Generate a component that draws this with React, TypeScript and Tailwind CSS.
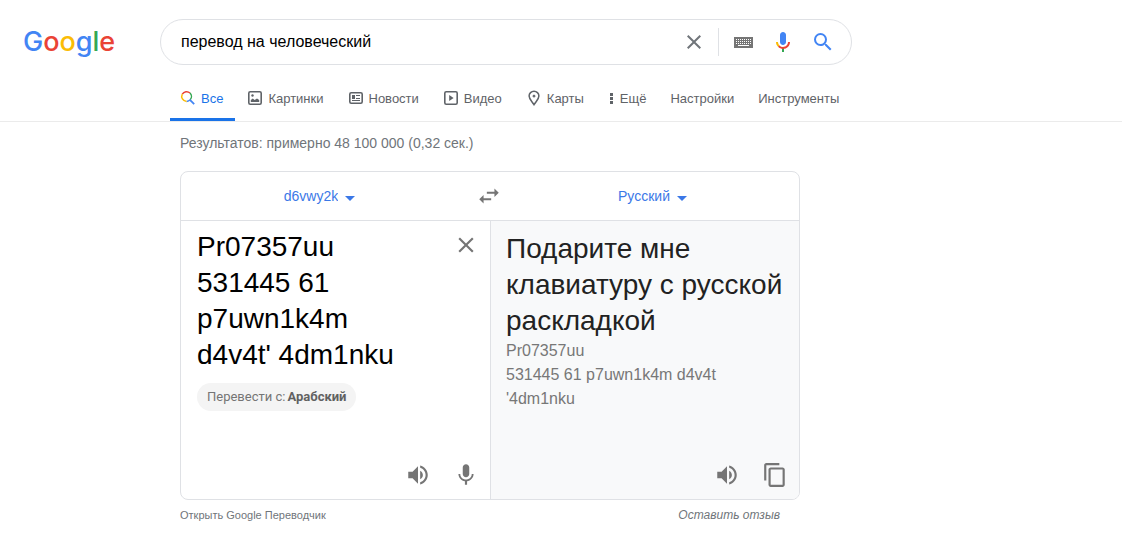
import { useState } from 'react'
import type { ReactNode } from 'react'

interface IconProps {
  className?: string
  path: string
}

interface TabProps {
  label: string
  icon?: ReactNode
  active?: boolean
}

const CLOSE =
  'M19 6.41L17.59 5 12 10.59 6.41 5 5 6.41 10.59 12 5 17.59 6.41 19 12 13.41 17.59 19 19 17.59 13.41 12z'
const SEARCH =
  'M15.5 14h-.79l-.28-.27A6.47 6.47 0 0 0 16 9.5 6.5 6.5 0 1 0 9.5 16c1.61 0 3.09-.59 4.23-1.57l.27.28v.79l5 4.99L20.49 19l-4.99-5zm-6 0C7.01 14 5 11.99 5 9.5S7.01 5 9.5 5 14 7.01 14 9.5 11.99 14 9.5 14z'
const SWAP =
  'M6.99 11L3 15l3.99 4v-3H14v-2H6.99v-3zM21 9l-3.99-4v3H10v2h7.01v3L21 9z'
const SPEAKER =
  'M3 9v6h4l5 5V4L7 9H3zm13.5 3c0-1.77-1.02-3.29-2.5-4.03v8.05c1.48-.73 2.5-2.25 2.5-4.02zM14 3.23v2.06c2.89.86 5 3.54 5 6.71s-2.11 5.85-5 6.71v2.06c4.01-.91 7-4.49 7-8.77s-2.99-7.86-7-8.77z'
const MIC =
  'M12 14c1.66 0 2.99-1.34 2.99-3L15 5c0-1.66-1.34-3-3-3S9 3.34 9 5v6c0 1.66 1.34 3 3 3zm5.3-3c0 3-2.54 5.1-5.3 5.1S6.7 14 6.7 11H5c0 3.41 2.72 6.23 6 6.72V21h2v-3.28c3.28-.48 6-3.3 6-6.72h-1.7z'
const COPY =
  'M16 1H4c-1.1 0-2 .9-2 2v14h2V3h12V1zm3 4H8c-1.1 0-2 .9-2 2v14c0 1.1.9 2 2 2h11c1.1 0 2-.9 2-2V7c0-1.1-.9-2-2-2zm0 16H8V7h11v14z'

function Icon({ className = 'size-[26px]', path }: IconProps) {
  return (
    <svg viewBox="0 0 24 24" className={className} fill="currentColor" aria-hidden="true">
      <path d={path} />
    </svg>
  )
}

function KeyboardIcon() {
  const columns = [2, 4, 6, 8, 10, 12, 14, 16]
  return (
    <svg viewBox="0 0 19 11" className="h-[11px] w-[19px]" shapeRendering="crispEdges" aria-hidden="true">
      <rect width="19" height="11" fill="#757575" />
      {[2, 4, 6].map(y =>
        columns.map(x => <rect key={`${x}-${y}`} x={x} y={y} width="1" height="1" fill="#fff" />)
      )}
      <rect x="4" y="8" width="11" height="1" fill="#fff" />
    </svg>
  )
}

function VoiceIcon() {
  return (
    <svg viewBox="0 0 24 24" className="size-6" aria-hidden="true">
      <path
        fill="#4285f4"
        d="M12 15c1.66 0 3-1.31 3-2.97V5.01C15 3.35 13.66 2 12 2S9 3.34 9 5.01v7.02C9 13.69 10.34 15 12 15z"
      />
      <path fill="#34a853" d="M11 18.08h2V22h-2z" />
      <path
        fill="#fbbc05"
        d="M7.05 16.87C5.78 15.54 5 14.04 5 12h2c0 1.45.56 2.42 1.47 3.38v.32l-1.15 1.18z"
      />
      <path
        fill="#ea4335"
        d="M12 16.93a4.97 5.25 0 0 1-3.54-1.55l-1.41 1.49C8.31 18.21 10.07 19 12 19c3.87 0 6.99-2.92 6.99-7H17c0 2.92-2.24 4.93-5 4.93z"
      />
    </svg>
  )
}

function AllIcon() {
  return (
    <svg viewBox="0 0 16 16" className="size-4" fill="none" strokeWidth="1.5" aria-hidden="true">
      <path d="M2.3 4.1A5 5 0 0 1 10 3" stroke="#ea4335" />
      <path d="M10 3A5 5 0 0 1 10.2 9.8" stroke="#34a853" />
      <path d="M10.2 9.8A5 5 0 0 1 6.6 11.4" stroke="#4285f4" />
      <path d="M6.6 11.4A5 5 0 0 1 2.3 4.1" stroke="#fbbc05" />
      <path d="M9.9 9.9L14.2 14.2" stroke="#4285f4" strokeWidth="1.8" />
    </svg>
  )
}

function PictureIcon() {
  return (
    <svg viewBox="0 0 16 16" className="size-4" fill="currentColor" aria-hidden="true">
      <rect x="1.8" y="1.8" width="12.4" height="12.4" rx="1.4" fill="none" stroke="currentColor" strokeWidth="1.6" />
      <circle cx="5.5" cy="5.5" r="1.2" />
      <path d="M3.8 12V10l2-1.6 1.8 1.6 2.4-1.6L12.2 10v2z" />
    </svg>
  )
}

function NewsIcon() {
  return (
    <svg viewBox="0 0 16 16" className="size-4" fill="currentColor" aria-hidden="true">
      <rect x="1.8" y="2.8" width="12.4" height="10.4" rx="1.4" fill="none" stroke="currentColor" strokeWidth="1.6" />
      <path d="M4 5h3v4H4zM8 5h4v1H8zM8 8h4v1H8zM4 10h8v1H4z" />
    </svg>
  )
}

function VideoIcon() {
  return (
    <svg viewBox="0 0 16 16" className="size-4" fill="currentColor" aria-hidden="true">
      <rect x="1.8" y="1.8" width="12.4" height="12.4" rx="1.4" fill="none" stroke="currentColor" strokeWidth="1.6" />
      <path d="M6.2 5l4.4 3-4.4 3z" />
    </svg>
  )
}

function PinIcon() {
  return (
    <svg viewBox="0 0 16 16" className="size-4" fill="none" stroke="currentColor" aria-hidden="true">
      <path d="M8 1.2a4.9 4.9 0 0 0-4.9 4.9c0 3 2.9 5.3 4.9 8.6 2-3.3 4.9-5.6 4.9-8.6A4.9 4.9 0 0 0 8 1.2z" strokeWidth="1.5" />
      <circle cx="8" cy="6.1" r="1" fill="currentColor" />
    </svg>
  )
}

function MoreIcon() {
  return (
    <svg viewBox="0 0 7 16" className="h-4 w-[7px]" fill="currentColor" aria-hidden="true">
      <path d="M2 3h3v3H2zM2 7h3v3H2zM2 11h3v3H2z" />
    </svg>
  )
}

function Tab({ label, icon, active = false }: TabProps) {
  return (
    <a
      href="#"
      aria-current={active ? 'page' : undefined}
      className={`flex h-[43px] items-center gap-[5px] border-b-3 pr-3 pl-[10px] whitespace-nowrap ${
        active ? 'border-[#1a73e8] text-[#1a73e8]' : 'border-transparent'
      }`}
    >
      {icon}
      {label}
    </a>
  )
}

function LanguageSelect({ label, value }: { label: string; value: string }) {
  return (
    <label className="flex items-center gap-[7px] text-sm text-[#3b78e7]">
      <select aria-label={label} className="appearance-none bg-transparent field-sizing-content">
        <option>{value}</option>
      </select>
      <svg viewBox="0 0 10 5" className="mt-1 h-[5px] w-[10px]" fill="currentColor" aria-hidden="true">
        <path d="M0 0h10L5 5z" />
      </svg>
    </label>
  )
}

export default function App() {
  const [query, setQuery] = useState('перевод на человеческий')
  const [source, setSource] = useState("Pr07357uu\n531445 61\np7uwn1k4m\nd4v4t' 4dm1nku")

  return (
    <div className="min-h-screen bg-white pb-6 font-['Liberation_Sans',Arial,sans-serif] text-[#222]">
      <header className="border-b border-[#ebebeb] pt-[19px]">
        <div className="flex items-center">
          <div className="w-40 shrink-0 pl-[23px]">
            <a href="#" className="block font-['Inter',sans-serif] text-[27px] leading-8 font-medium">
              <span className="text-[#4285f4]">G</span>
              <span className="text-[#ea4335]">o</span>
              <span className="text-[#fbbc05]">o</span>
              <span className="text-[#4285f4]">g</span>
              <span className="text-[#34a853]">l</span>
              <span className="text-[#ea4335]">e</span>
            </a>
          </div>
          <form
            role="search"
            onSubmit={e => e.preventDefault()}
            className="flex h-[46px] max-w-[692px] flex-1 items-center rounded-full border border-[#dfe1e5] pr-4 pl-5"
          >
            <input
              type="text"
              aria-label="Найти"
              value={query}
              onChange={e => setQuery(e.target.value)}
              className="min-w-0 flex-1 text-base text-black outline-none"
            />
            <button type="button" aria-label="Очистить" onClick={() => setQuery('')} className="mr-3 text-[#70757a]">
              <Icon path={CLOSE} className="size-6" />
            </button>
            <div className="flex h-7 items-center gap-4 border-l border-[#dfe1e5] pl-[15px]">
              <button type="button" aria-label="Экранная клавиатура" className="pr-[2px]">
                <KeyboardIcon />
              </button>
              <button type="button" aria-label="Голосовой поиск">
                <VoiceIcon />
              </button>
              <button type="submit" aria-label="Поиск" className="text-[#4285f4]">
                <Icon path={SEARCH} className="size-6" />
              </button>
            </div>
          </form>
        </div>

        <nav className="mt-[13px] ml-[170px] flex gap-[2px] text-[13px] leading-[21px] text-[#5f6368]">
          <Tab label="Все" icon={<AllIcon />} active />
          <Tab label="Картинки" icon={<PictureIcon />} />
          <Tab label="Новости" icon={<NewsIcon />} />
          <Tab label="Видео" icon={<VideoIcon />} />
          <Tab label="Карты" icon={<PinIcon />} />
          <Tab label="Ещё" icon={<MoreIcon />} />
          <Tab label="Настройки" />
          <Tab label="Инструменты" />
        </nav>
      </header>

      <main className="ml-[180px] max-w-[620px]">
        <p className="pt-[11px] text-sm text-[#70757a]">Результатов: примерно 48 100 000 (0,32 сек.)</p>

        <section className="mt-[18px] overflow-hidden rounded-lg border border-[#dfe1e5]">
          <div className="flex h-[49px] items-center border-b border-[#dfe1e5] pr-2">
            <div className="flex flex-1 justify-center pr-3">
              <LanguageSelect label="Исходный язык" value="d6vwy2k" />
            </div>
            <button type="button" aria-label="Поменять языки" className="px-[6px] text-[#757575]">
              <Icon path={SWAP} />
            </button>
            <div className="flex flex-1 justify-center pl-[6px]">
              <LanguageSelect label="Язык перевода" value="Русский" />
            </div>
          </div>

          <div className="grid min-h-[278px] grid-cols-2">
            <div className="flex flex-col pt-2 pr-[11px] pb-[11px] pl-4">
              <div className="flex items-start">
                <textarea
                  aria-label="Исходный текст"
                  rows={4}
                  value={source}
                  onChange={e => setSource(e.target.value)}
                  className="min-w-0 flex-1 resize-none overflow-hidden text-[28px] leading-9 text-black outline-none"
                />
                <button
                  type="button"
                  aria-label="Удалить текст"
                  onClick={() => setSource('')}
                  className="mt-[3px] text-[#757575]"
                >
                  <Icon path={CLOSE} />
                </button>
              </div>
              <button
                type="button"
                className="mt-[10px] flex h-7 items-center gap-[2px] self-start rounded-full bg-[#f4f4f4] px-[10px] font-[Roboto,sans-serif] text-[13px] text-[#757575]"
              >
                <span>Перевести с:</span>
                <b className="font-bold text-[#616161]">Арабский</b>
              </button>
              <div className="mt-auto flex justify-end gap-[22px] text-[#757575]">
                <button type="button" aria-label="Прослушать исходный текст">
                  <Icon path={SPEAKER} />
                </button>
                <button type="button" aria-label="Голосовой ввод">
                  <Icon path={MIC} />
                </button>
              </div>
            </div>

            <div className="flex flex-col border-l border-[#dfe1e5] bg-[#f8f9fa] pt-[10px] pr-[11px] pb-[11px] pl-[15px]">
              <p className="text-[28px] leading-9">Подарите мне клавиатуру с русской раскладкой</p>
              <p className="text-base whitespace-pre-line text-[#777]">
                {"Pr07357uu\n531445 61 p7uwn1k4m d4v4t\n'4dm1nku"}
              </p>
              <div className="mt-auto flex justify-end gap-[22px] text-[#757575]">
                <button type="button" aria-label="Прослушать перевод">
                  <Icon path={SPEAKER} />
                </button>
                <button type="button" aria-label="Копировать перевод">
                  <Icon path={COPY} />
                </button>
              </div>
            </div>
          </div>
        </section>

        <footer className="mt-[7px] flex items-center justify-between pr-5 text-[#70757a]">
          <a href="#" className="text-[11px] leading-4">
            Открыть Google Переводчик
          </a>
          <a href="#" className="text-xs italic">
            Оставить отзыв
          </a>
        </footer>
      </main>
    </div>
  )
}
